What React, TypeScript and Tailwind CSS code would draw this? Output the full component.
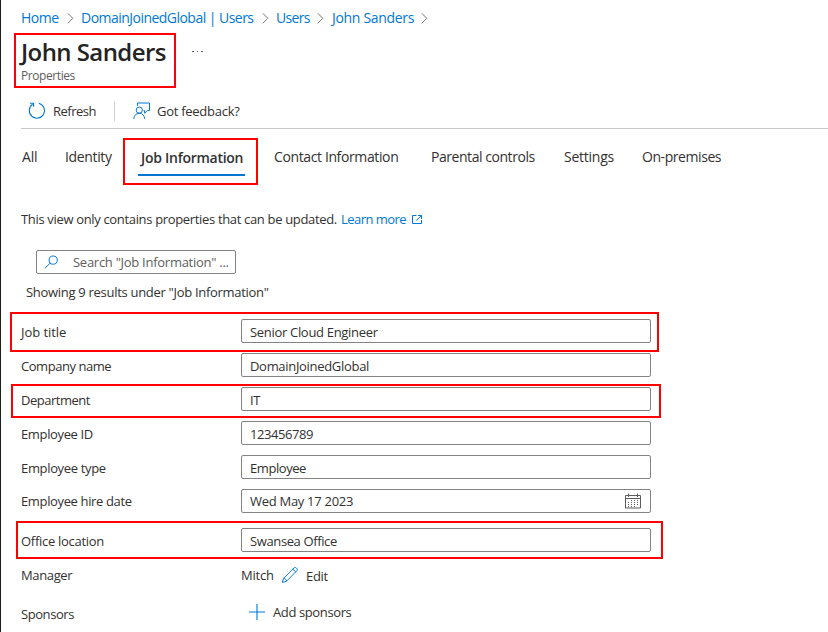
import type { ReactNode } from "react";

const Chevron = () => (
  <svg width="7" height="12" viewBox="0 0 7 12" className="shrink-0" fill="none" stroke="#777" strokeWidth="1">
    <path d="M0.8 1.3 L5.8 6.3 L0.8 11.3" />
  </svg>
);

const RefreshIcon = () => (
  <svg width="18" height="18" viewBox="0 0 18 18" fill="none" stroke="#0078d4" strokeWidth="1.1">
    <path d="M10.8 1.2 A7.6 7.6 0 1 1 4.6 2.3" />
    <path d="M2 1.2 H5.6 V4.8" />
  </svg>
);

const FeedbackIcon = () => (
  <svg width="18" height="18" viewBox="0 0 18 18" fill="none" stroke="#0078d4" strokeWidth="1">
    <path d="M4.6 4 V1 H16.5 V8.5 H14.4 L11.6 11.2 V8.5 H10.6" />
    <circle cx="6.3" cy="8.1" r="3.1" />
    <path d="M0.8 16.8 C1 13.3 3.3 11.3 6.3 11.3 S11.4 13.3 11.7 16.8" />
  </svg>
);

const ExternalIcon = () => (
  <svg width="11" height="11" viewBox="0 0 11 11" fill="none" stroke="#0078d4" strokeWidth="1">
    <path d="M4.5 1.5 H0.5 V9.5 H9.5 V6" />
    <path d="M6 1.5 H9.5 V5 M9.3 1.7 L4.3 6.5" />
  </svg>
);

const SearchIcon = () => (
  <svg width="15" height="15" viewBox="0 0 15 15" fill="none" stroke="#0078d4" strokeWidth="1">
    <circle cx="9.2" cy="5.1" r="4.1" />
    <path d="M6.3 8 L0.8 13.4" />
  </svg>
);

const CalendarIcon = () => (
  <svg width="16" height="16" viewBox="0 0 16 16" fill="none" stroke="#5c5c5c" strokeWidth="1">
    <path d="M0.5 2.5 H15.5 V15 H0.5 Z M0.5 5.5 H15.5 M3.5 0.5 V4 M12.5 0.5 V4" />
    <path d="M6 7.5 H14 M3 9.5 H14 M3 11.5 H14 M3 13.5 H11" strokeDasharray="1 2" />
  </svg>
);

const PencilIcon = () => (
  <svg width="18" height="18" viewBox="0 0 18 18" fill="none" stroke="#0078d4" strokeWidth="0.95">
    <path d="M1.3 16.5 L2.6 12.3 L12.9 2 C14.6 0.4 17.3 3 15.8 4.8 L5.5 15.2 Z" />
    <path d="M2.6 12.3 C4.1 12.4 5.4 13.7 5.5 15.2 M11.8 3.1 L14.8 6" />
  </svg>
);

const PlusIcon = () => (
  <svg width="16" height="16" viewBox="0 0 16 16" fill="none" stroke="#0078d4" strokeWidth="1.1">
    <path d="M8 0 V16 M0 8 H16" />
  </svg>
);

function Field({ label, labelClass, value, valueClass, textShift = "pt-[2px]", icon }: {
  label: string;
  labelClass: string;
  value: string;
  valueClass: string;
  textShift?: string;
  icon?: ReactNode;
}) {
  return (
    <div className="flex h-[34px] items-center">
      <div className={`w-[220px] ${textShift} ${labelClass}`}>{label}</div>
      <div className="flex h-6 w-[410px] items-center justify-between rounded-[2px] border border-[#858382] pr-[9px] pl-2">
        <span className={`${textShift} ${valueClass}`}>{value}</span>
        {icon}
      </div>
    </div>
  );
}

const Mark = ({ className }: { className: string }) => (
  <div className={`pointer-events-none absolute border-2 border-[#fe0000] ${className}`} />
);

export default function App() {
  return (
    <div className="relative h-[632px] w-[828px] overflow-hidden border-l border-[#1f1f1f] bg-white pl-5 font-['Open_Sans','Noto_Sans',sans-serif] text-[13px] leading-5 whitespace-nowrap text-[#323130]">
      <nav className="flex h-9 items-center text-[14px] text-[#0078d4]">
        <span className="w-[46px] tracking-[-0.5px]">Home</span>
        <Chevron />
        <span className="ml-[7px] w-[181px] tracking-[-0.53px]">DomainJoinedGlobal | Users</span>
        <Chevron />
        <span className="ml-[7px] w-[41px] tracking-[-0.7px]">Users</span>
        <Chevron />
        <span className="ml-2 w-[89px] tracking-[-0.31px]">John Sanders</span>
        <Chevron />
      </nav>

      <header>
        <div className="flex h-[31px] items-center">
          <h1 className="w-[171px] text-[24px] leading-[30px] font-semibold tracking-[-0.58px] text-[#242322]">John Sanders</h1>
          <div className="flex gap-[3px]">
            <i className="size-[1.5px] bg-[#605e5c]" />
            <i className="size-[1.5px] bg-[#605e5c]" />
            <i className="size-[1.5px] bg-[#605e5c]" />
          </div>
        </div>
        <div className="h-[18px] text-[12px] leading-[18px] tracking-[-0.42px] text-[#605e5c]">Properties</div>
      </header>

      <div className="mt-[9px] flex h-[35px] items-center border-b border-[#c8c8c8]">
        <div className="flex w-[93px] items-center pl-[7px]">
          <RefreshIcon />
          <span className="ml-[7px] tracking-[-0.5px]">Refresh</span>
        </div>
        <div className="h-5 w-px bg-[#d2d0ce]" />
        <div className="flex items-center pl-[18px]">
          <FeedbackIcon />
          <span className="ml-[6px] tracking-[-0.27px]">Got feedback?</span>
        </div>
      </div>

      <div className="flex h-[57px] items-start pt-[18px] text-[14px]">
        <span className="w-[44px] pl-px tracking-[-0.2px]">All</span>
        <span className="w-[73px] tracking-[-0.35px]">Identity</span>
        <span className="mt-px flex h-7 w-[107px] flex-col border-b-2 border-[#0078d4] pl-[3px] font-semibold tracking-[-0.27px]">Job Information</span>
        <span className="ml-[29px] w-[157px] tracking-[-0.38px]">Contact Information</span>
        <span className="w-[133px] tracking-[-0.45px]">Parental controls</span>
        <span className="w-[78px] tracking-[-0.25px]">Settings</span>
        <span className="tracking-[-0.43px]">On-premises</span>
      </div>

      <p className="mt-[23px] flex h-5 items-center">
        <span className="w-[320px] tracking-[-0.335px]">This view only contains properties that can be updated.</span>
        <span className="w-[71px] tracking-[-0.55px] text-[#0078d4]">Learn more</span>
        <ExternalIcon />
      </p>

      <div className="mt-[21px] ml-[15px] flex h-6 w-[200px] items-center rounded-[2px] border border-[#858382] pl-[7px] text-[#605e5c]">
        <SearchIcon />
        <span className="ml-[14px] tracking-[-0.27px]">Search "Job Information" ...</span>
      </div>
      <p className="mt-2 pl-[5px] tracking-[-0.295px]">Showing 9 results under "Job Information"</p>

      <div className="mt-3">
        <Field label="Job title" labelClass="tracking-[-0.05px]" value="Senior Cloud Engineer" valueClass="tracking-[-0.31px]" />
        <Field label="Company name" labelClass="tracking-[-0.46px]" value="DomainJoinedGlobal" valueClass="tracking-[-0.31px]" />
        <Field label="Department" labelClass="tracking-[-0.48px]" value="IT" valueClass="tracking-[-0.3px]" />
        <Field label="Employee ID" labelClass="tracking-[-0.36px]" value="123456789" valueClass="tracking-[-0.42px]" />
        <Field label="Employee type" labelClass="tracking-[-0.34px]" value="Employee" valueClass="tracking-[-0.43px]" />
        <Field label="Employee hire date" labelClass="tracking-[-0.36px]" value="Wed May 17 2023" valueClass="tracking-[-0.29px]" textShift="pt-0" icon={<CalendarIcon />} />
        <div className="h-[5px]" />
        <Field label="Office location" labelClass="tracking-[-0.29px]" value="Swansea Office" valueClass="tracking-[-0.38px]" />
      </div>

      <div className="mt-2 flex h-5 items-center">
        <span className="w-[220px] tracking-[-0.36px]">Manager</span>
        <span className="w-10 tracking-[-0.2px]">Mitch</span>
        <PencilIcon />
        <span className="ml-[7px] pt-[2px] tracking-[-0.3px]">Edit</span>
      </div>
      <div className="mt-4 flex h-[22px] items-center">
        <span className="w-[228px] pt-[4px] tracking-[-0.43px]">Sponsors</span>
        <PlusIcon />
        <span className="ml-2 tracking-[-0.38px]">Add sponsors</span>
      </div>

      <Mark className="top-[33px] left-[13px] h-[55px] w-[162px]" />
      <Mark className="top-[138px] left-[122px] h-[47px] w-[135px]" />
      <Mark className="top-[312px] left-[9px] h-[40px] w-[649px]" />
      <Mark className="top-[384px] left-[10px] h-[34px] w-[650px]" />
      <Mark className="top-[521px] left-[15px] h-[38px] w-[647px]" />
    </div>
  );
}
